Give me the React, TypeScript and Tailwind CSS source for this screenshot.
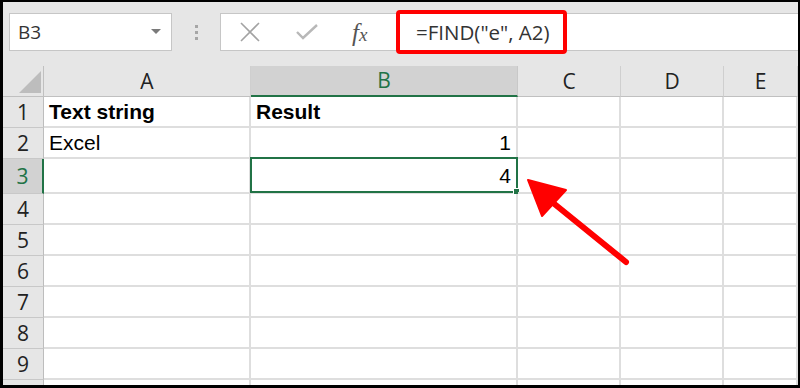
import React from "react";

const cols = [
  { name: "A", w: "w-[207px]" },
  { name: "B", w: "w-[267px]" },
  { name: "C", w: "w-[103px]" },
  { name: "D", w: "w-[103px]" },
  { name: "E", w: "w-[74px]" },
];

const rows = [
  { n: 1, h: "h-[31px]" },
  { n: 2, h: "h-[31px]" },
  { n: 3, h: "h-[35px]" },
  { n: 4, h: "h-[31px]" },
  { n: 5, h: "h-[31px]" },
  { n: 6, h: "h-[31px]" },
  { n: 7, h: "h-[31px]" },
  { n: 8, h: "h-[31px]" },
  { n: 9, h: "h-[31px]" },
  { n: 10, h: "h-[31px]" },
];

const data: Record<string, { text: string; bold?: boolean; right?: boolean }> = {
  A1: { text: "Text string", bold: true },
  B1: { text: "Result", bold: true },
  A2: { text: "Excel" },
  B2: { text: "1", right: true },
  B3: { text: "4", right: true },
};

export default function App() {
  const ui = { fontFamily: '"Open Sans", "Noto Sans", sans-serif' };
  const cell = { fontFamily: '"Liberation Sans", Arial, sans-serif' };
  return (
    <div className="relative w-[800px] h-[388px] overflow-hidden bg-[#e6e6e6] border-l-[3px] border-t-2 border-b-[3px] border-r-2 border-black flex flex-col" style={ui}>
      {/* toolbar */}
      <div className="h-[64px] shrink-0 flex items-start pt-[11px] pl-[6px] bg-[#e6e6e6]">
        <div className="w-[163px] h-[38px] bg-white border border-[#c6c6c6] flex items-center pl-[8px] pr-[10px]">
          <span className="text-[19px] text-[#333] flex-1 leading-none">B3</span>
          <svg width="10" height="6" viewBox="0 0 10 6"><path d="M0 0 L10 0 L5 5 Z" fill="#7a7a7a" /></svg>
        </div>
        <div className="w-[48px] h-[38px] flex flex-col items-center justify-center gap-[3px]">
          <div className="w-[3px] h-[3px] bg-[#a6a6a6]" />
          <div className="w-[3px] h-[3px] bg-[#a6a6a6]" />
          <div className="w-[3px] h-[3px] bg-[#a6a6a6]" />
        </div>
        <div className="flex-1 h-[38px] bg-white border border-[#c6c6c6] border-r-0 flex items-center">
          <div className="w-[176px] flex items-center h-full">
            <svg className="ml-[17px]" width="24" height="22" viewBox="0 0 24 22">
              <path d="M3 2 L21 20 M21 2 L3 20" stroke="#a3a3a3" strokeWidth="1.6" fill="none" />
            </svg>
            <svg className="ml-[33px]" width="24" height="20" viewBox="0 0 24 20">
              <path d="M2 10 L8 16 L22 3" stroke="#b8b8b8" strokeWidth="2.4" fill="none" />
            </svg>
            <span className="ml-[33px] italic text-[#555] leading-none" style={{ fontFamily: '"Liberation Serif", "Times New Roman", serif' }}>
              <span className="text-[25px]">f</span><span className="text-[19px]">x</span>
            </span>
          </div>
          <div className="-my-[3px] h-[44px] w-[171px] border-[4px] border-[#ff0000] rounded-[4px] flex items-center pl-[16px] -ml-[1px]">
            <span className="text-[20.5px] text-[#333] leading-none whitespace-nowrap">=FIND("e", A2)</span>
          </div>
        </div>
      </div>

      {/* grid */}
      <div className="flex flex-col bg-white">
        {/* header row */}
        <div className="flex h-[31px] shrink-0">
          <div className="w-[41px] h-full bg-[#e6e6e6] border-r border-b border-[#c0c0c0] flex items-end justify-end pr-[2px] pb-[3px]">
            <svg width="22" height="22" viewBox="0 0 22 22"><path d="M22 0 L22 22 L0 22 Z" fill="#bdbdbd" /></svg>
          </div>
          {cols.map((c) => (
            <div
              key={c.name}
              className={`${c.w} h-full flex items-center justify-center text-[21px] leading-none border-r ${
                c.name === "B"
                  ? "bg-[#d2d2d2] text-[#217346] border-b-2 border-b-[#217346] border-r-[#c8c8c8]"
                  : "bg-[#e6e6e6] text-[#222] border-b border-b-[#c0c0c0] border-r-[#cfcfcf]"
              }`}
            >
              {c.name}
            </div>
          ))}
        </div>
        {rows.map((r) => (
          <div key={r.n} className={`flex ${r.h} shrink-0`}>
            <div
              className={`w-[41px] h-full flex items-center justify-center text-[21px] leading-none border-b border-b-[#c8c8c8] ${
                r.n === 3
                  ? "bg-[#d2d2d2] text-[#217346] border-r-2 border-r-[#217346]"
                  : "bg-[#e6e6e6] text-[#222] border-r border-r-[#bdbdbd]"
              }`}
            >
              {r.n < 10 ? r.n : ""}
            </div>
            {cols.map((c) => {
              const key = `${c.name}${r.n}`;
              const d = data[key];
              return (
                <div
                  key={key}
                  className={`${c.w} relative h-full border-r-2 border-b-2 border-[#dedede] flex items-center px-[5px] text-[21px] leading-none text-black ${
                    d?.right ? "justify-end" : "justify-start"
                  } ${d?.bold ? "font-bold" : ""}`}
                  style={cell}
                >
                  {d?.text}
                  {key === "B3" && (
                    <div className="absolute -left-[1px] -top-[2px] -right-[2px] -bottom-[1px] border-2 border-[#217346]">
                      <div className="absolute -right-[4px] -bottom-[4px] w-[7px] h-[7px] bg-[#217346] border border-white" />
                    </div>
                  )}
                </div>
              );
            })}
          </div>
        ))}
      </div>

      {/* arrow annotation */}
      <svg className="absolute left-[-3px] top-[-2px] pointer-events-none" width="800" height="388" viewBox="0 0 800 388">
        <line x1="626" y1="262" x2="552" y2="202" stroke="#ff0000" strokeWidth="6" strokeLinecap="round" />
        <path d="M528 180 L566 190 L542 216 Z" fill="#ff0000" stroke="#ff0000" strokeWidth="2" strokeLinejoin="round" />
      </svg>
    </div>
  );
}
